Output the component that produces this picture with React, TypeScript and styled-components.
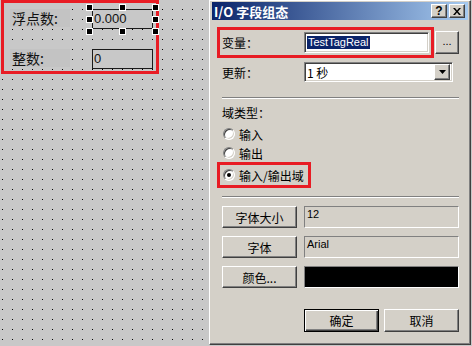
import React from 'react';
import styled, { createGlobalStyle, css } from 'styled-components';

const GlobalStyle = createGlobalStyle`
  html, body {
    margin: 0;
    padding: 0;
    width: 472px;
    height: 346px;
    overflow: hidden;
  }
  body {
    font-family: "Noto Sans CJK SC", "Liberation Sans", sans-serif;
    font-size: 12px;
    color: #000;
  }
`;

const FACE = '#d4d0c8';
const RED = '#e81c24';
const CJK = `"Noto Sans CJK SC", "Liberation Sans", sans-serif`;
const LATIN = `"Liberation Sans", Arial, sans-serif`;

const raised = css`
  border: 1px solid;
  border-color: #fff #404040 #404040 #fff;
  box-shadow: inset -1px -1px #808080;
  background: ${FACE};
`;

const sunken = css`
  border: 1px solid;
  border-color: #808080 #fff #fff #808080;
  box-shadow: inset 1px 1px #404040, inset -1px -1px ${FACE};
`;

const Screen = styled.div`
  display: flex;
  align-items: flex-start;
  width: 472px;
  height: 346px;
  background-color: #c8c8c8;
  background-image:
    linear-gradient(to bottom, transparent 1px, #c8c8c8 1px),
    linear-gradient(to right, #000 1px, #c8c8c8 1px);
  background-size: 10px 10px, 10px 10px;
  background-position: 2px 9px, 2px 9px;
`;

/* ---------- design canvas ---------- */

const Canvas = styled.div`
  position: relative;
  flex: 0 0 209px;
  height: 346px;
`;

const Highlight = styled.div`
  position: absolute;
  left: 1px;
  top: 0;
  width: 158px;
  height: 74px;
  box-sizing: border-box;
  border: 3px solid ${RED};
`;

const CanvasLabel = styled.div<{ $top: number }>`
  position: absolute;
  left: 10px;
  top: ${p => p.$top}px;
  width: 60px;
  height: 18px;
  background: #c3c3c3;
  padding-left: 2px;
  box-sizing: border-box;
  font-family: ${CJK};
  font-size: 14px;
  line-height: 18px;
  color: #111;
`;

const CanvasField = styled.div<{ $top: number }>`
  position: absolute;
  left: 92px;
  top: ${p => p.$top}px;
  width: 61px;
  height: 20px;
  box-sizing: border-box;
  border: 1px solid #1a1a1a;
  background: #c8c8c8;
  padding-left: 1px;
  font-family: ${LATIN};
  font-size: 13px;
  line-height: 18px;
  color: #111;
`;

const Handle = styled.span<{ $x: number; $y: number }>`
  position: absolute;
  left: ${p => p.$x - 3}px;
  top: ${p => p.$y - 3}px;
  width: 5px;
  height: 5px;
  background: #000;
  border: 1px solid #fff;
`;

/* ---------- dialog window ---------- */

const Dialog = styled.div`
  flex: 0 0 262px;
  height: 345px;
  box-sizing: border-box;
  background: ${FACE};
  border: 1px solid;
  border-color: #fff #404040 #404040 #fff;
  box-shadow: inset -1px -1px #808080;
  padding: 1px 2px 2px 2px;
  display: flex;
  flex-direction: column;
`;

const TitleBar = styled.div`
  height: 18px;
  display: flex;
  align-items: center;
  background: linear-gradient(to right, #0a246a, #a6caf0);
  padding: 0 3px 0 2px;
`;

const Title = styled.div`
  flex: 1;
  color: #fff;
  font-weight: bold;
  font-size: 13px;
  font-family: ${CJK};
`;

const CaptionButton = styled.div`
  ${raised};
  width: 16px;
  height: 14px;
  box-sizing: border-box;
  display: flex;
  align-items: center;
  justify-content: center;
  font-family: ${LATIN};
  font-weight: bold;
  font-size: 12px;
  margin-left: 2px;
`;

const Body = styled.div`
  padding: 0 9px 0 10px;
  display: flex;
  flex-direction: column;
`;

const Row = styled.div<{ $mt: number }>`
  display: flex;
  align-items: center;
  margin-top: ${p => p.$mt}px;
`;

const Marked = styled.div`
  display: flex;
  align-items: center;
  outline: 3px solid ${RED};
  outline-offset: 2px;
`;

const Label = styled.div`
  width: 82px;
  font-family: ${CJK};
  font-size: 12px;
`;

const TextInput = styled.div`
  ${sunken};
  width: 125px;
  height: 21px;
  box-sizing: border-box;
  background: #fff;
  display: flex;
  align-items: center;
  padding-left: 2px;
`;

const Selected = styled.span`
  background: #0a246a;
  color: #fff;
  font-family: ${LATIN};
  font-size: 11px;
  line-height: 13px;
  padding: 0 1px;
`;

const SmallButton = styled.div`
  ${raised};
  width: 24px;
  height: 23px;
  box-sizing: border-box;
  margin-left: 6px;
  display: flex;
  align-items: flex-end;
  justify-content: center;
  padding-bottom: 6px;
  font-family: ${LATIN};
  font-size: 11px;
`;

const Select = styled.div`
  ${sunken};
  width: 149px;
  height: 20px;
  box-sizing: border-box;
  background: #fff;
  display: flex;
  align-items: center;
  padding: 0 2px 0 2px;
  font-family: ${CJK};
  font-size: 12px;
`;

const SelectText = styled.div`
  flex: 1;
`;

const ArrowButton = styled.div`
  ${raised};
  width: 16px;
  height: 16px;
  box-sizing: border-box;
  display: flex;
  align-items: center;
  justify-content: center;
`;

const Separator = styled.div<{ $mt: number }>`
  margin-top: ${p => p.$mt}px;
  height: 1px;
  background: #808080;
  border-bottom: 1px solid #fff;
`;

const GroupLabel = styled.div`
  margin-top: 6px;
  height: 16px;
  line-height: 16px;
  font-family: ${CJK};
`;

const RadioRow = styled.div<{ $mt: number }>`
  display: flex;
  align-items: center;
  height: 16px;
  margin-top: ${p => p.$mt}px;
  padding-left: 1px;
  font-family: ${CJK};
`;

const RadioMarked = styled(RadioRow)`
  align-self: flex-start;
  padding-right: 2px;
  outline: 3px solid ${RED};
  outline-offset: 2px;
`;

const RadioCircle = styled.span<{ $on?: boolean }>`
  width: 12px;
  height: 12px;
  box-sizing: border-box;
  border-radius: 50%;
  border: 1px solid;
  border-color: #808080 #fff #fff #808080;
  box-shadow: inset 1px 1px #404040, inset -1px -1px ${FACE};
  background: #fff;
  margin-right: 4px;
  display: flex;
  align-items: center;
  justify-content: center;
  &::after {
    content: '';
    width: 4px;
    height: 4px;
    border-radius: 50%;
    background: ${p => (p.$on ? '#000' : 'transparent')};
  }
`;

const PushButton = styled.div<{ $default?: boolean }>`
  ${raised};
  width: 75px;
  height: 22px;
  box-sizing: border-box;
  display: flex;
  align-items: center;
  justify-content: center;
  font-family: ${CJK};
  font-size: 12px;
  ${p =>
    p.$default &&
    css`
      border: 1px solid #000;
      box-shadow: inset 1px 1px #fff, inset -1px -1px #404040, inset -2px -2px #808080;
    `}
`;

const ReadField = styled.div<{ $fill?: string }>`
  width: 155px;
  height: 22px;
  box-sizing: border-box;
  margin-left: 7px;
  border: 1px solid;
  border-color: #808080 #fff #fff #808080;
  background: ${p => p.$fill ?? FACE};
  padding: 1px 2px;
  font-family: ${LATIN};
  font-size: 11px;
  line-height: 13px;
`;

const Footer = styled.div`
  display: flex;
  justify-content: flex-end;
  gap: 5px;
  margin-top: 21px;
  & > ${PushButton} {
    height: 23px;
  }
`;

export default function App() {
  return (
    <>
      <GlobalStyle />
      <Screen>
        <Canvas>
          <CanvasLabel $top={9}>浮点数:</CanvasLabel>
          <CanvasField $top={9}>0.000</CanvasField>
          <CanvasLabel $top={49}>整数:</CanvasLabel>
          <CanvasField $top={49}>0</CanvasField>
          <Highlight />
          {[
            [89, 7], [122, 7], [155, 7],
            [89, 19], [155, 19],
            [89, 31], [122, 31], [155, 31],
          ].map(([x, y]) => (
            <Handle key={`${x}-${y}`} $x={x} $y={y} />
          ))}
        </Canvas>

        <Dialog>
          <TitleBar>
            <Title>I/O 字段组态</Title>
            <CaptionButton>?</CaptionButton>
            <CaptionButton>
              <svg width="8" height="7" viewBox="0 0 8 7">
                <path d="M0 0h2l2 2.5L6 0h2L5 3.5 8 7H6L4 4.5 2 7H0l3-3.5z" fill="#000" />
              </svg>
            </CaptionButton>
          </TitleBar>

          <Body>
            <Row $mt={11}>
              <Marked>
                <Label>变量：</Label>
                <TextInput>
                  <Selected>TestTagReal</Selected>
                </TextInput>
              </Marked>
              <SmallButton>...</SmallButton>
            </Row>

            <Row $mt={8}>
              <Label>更新：</Label>
              <Select>
                <SelectText>1 秒</SelectText>
                <ArrowButton>
                  <svg width="7" height="4" viewBox="0 0 7 4">
                    <path d="M0 0h7L3.5 4z" fill="#000" />
                  </svg>
                </ArrowButton>
              </Select>
            </Row>

            <Separator $mt={15} />

            <GroupLabel>域类型：</GroupLabel>
            <RadioRow $mt={5}>
              <RadioCircle />
              输入
            </RadioRow>
            <RadioRow $mt={3}>
              <RadioCircle />
              输出
            </RadioRow>
            <RadioMarked $mt={6}>
              <RadioCircle $on />
              输入/输出域
            </RadioMarked>

            <Separator $mt={13} />

            <Row $mt={8}>
              <PushButton>字体大小</PushButton>
              <ReadField>12</ReadField>
            </Row>
            <Row $mt={8}>
              <PushButton>字体</PushButton>
              <ReadField>Arial</ReadField>
            </Row>
            <Row $mt={8}>
              <PushButton>颜色...</PushButton>
              <ReadField $fill="#000" />
            </Row>

            <Footer>
              <PushButton $default>确定</PushButton>
              <PushButton>取消</PushButton>
            </Footer>
          </Body>
        </Dialog>
      </Screen>
    </>
  );
}
